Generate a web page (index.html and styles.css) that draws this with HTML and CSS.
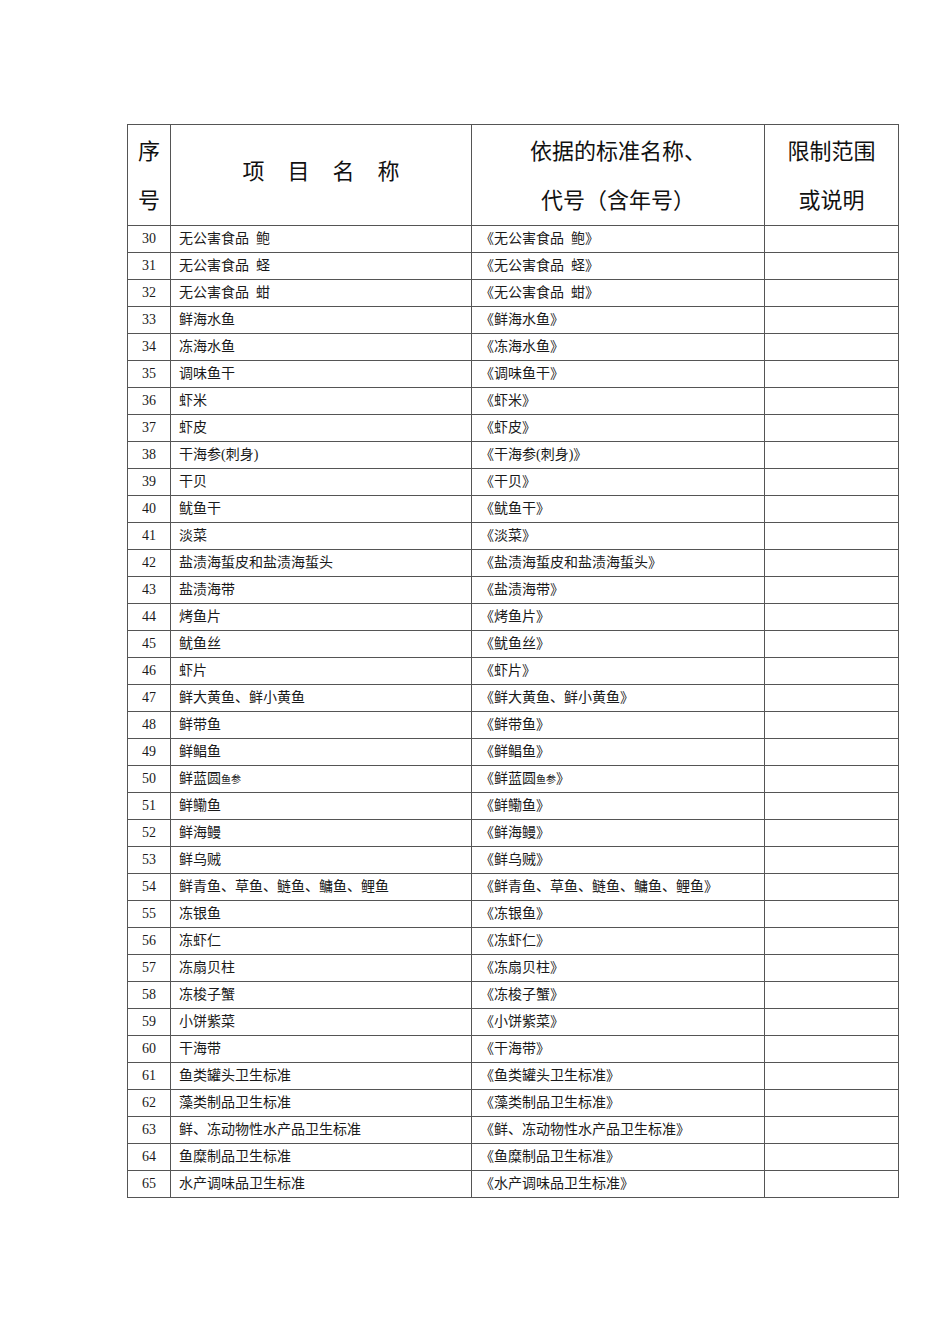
FILE: index.html
```html
<!DOCTYPE html>
<html lang="zh">
<head>
<meta charset="utf-8">
<title>标准目录</title>
<link rel="stylesheet" href="styles.css">
</head>
<body>
<div class="page">
<table class="std">
<colgroup><col class="c1"><col class="c2"><col class="c3"><col class="c4"></colgroup>
<thead>
<tr class="head">
<th><div class="hdown">序<br>号</div></th>
<th><div class="hup">项目名称</div></th>
<th><div class="hdown">依据的标准名称、<br>代号（含年号）</div></th>
<th><div class="hdown">限制范围<br>或说明</div></th>
</tr>
</thead>
<tbody>
<tr><td class="n">30</td><td>无公害食品&ensp;鲍</td><td>《无公害食品&ensp;鲍》</td><td></td></tr>
<tr><td class="n">31</td><td>无公害食品&ensp;蛏</td><td>《无公害食品&ensp;蛏》</td><td></td></tr>
<tr><td class="n">32</td><td>无公害食品&ensp;蚶</td><td>《无公害食品&ensp;蚶》</td><td></td></tr>
<tr><td class="n">33</td><td>鲜海水鱼</td><td>《鲜海水鱼》</td><td></td></tr>
<tr><td class="n">34</td><td>冻海水鱼</td><td>《冻海水鱼》</td><td></td></tr>
<tr><td class="n">35</td><td>调味鱼干</td><td>《调味鱼干》</td><td></td></tr>
<tr><td class="n">36</td><td>虾米</td><td>《虾米》</td><td></td></tr>
<tr><td class="n">37</td><td>虾皮</td><td>《虾皮》</td><td></td></tr>
<tr><td class="n">38</td><td>干海参(刺身)</td><td>《干海参(刺身)》</td><td></td></tr>
<tr><td class="n">39</td><td>干贝</td><td>《干贝》</td><td></td></tr>
<tr><td class="n">40</td><td>鱿鱼干</td><td>《鱿鱼干》</td><td></td></tr>
<tr><td class="n">41</td><td>淡菜</td><td>《淡菜》</td><td></td></tr>
<tr><td class="n">42</td><td>盐渍海蜇皮和盐渍海蜇头</td><td>《盐渍海蜇皮和盐渍海蜇头》</td><td></td></tr>
<tr><td class="n">43</td><td>盐渍海带</td><td>《盐渍海带》</td><td></td></tr>
<tr><td class="n">44</td><td>烤鱼片</td><td>《烤鱼片》</td><td></td></tr>
<tr><td class="n">45</td><td>鱿鱼丝</td><td>《鱿鱼丝》</td><td></td></tr>
<tr><td class="n">46</td><td>虾片</td><td>《虾片》</td><td></td></tr>
<tr><td class="n">47</td><td>鲜大黄鱼、鲜小黄鱼</td><td>《鲜大黄鱼、鲜小黄鱼》</td><td></td></tr>
<tr><td class="n">48</td><td>鲜带鱼</td><td>《鲜带鱼》</td><td></td></tr>
<tr><td class="n">49</td><td>鲜鲳鱼</td><td>《鲜鲳鱼》</td><td></td></tr>
<tr><td class="n">50</td><td>鲜蓝圆<span class="sm">鱼参</span></td><td>《鲜蓝圆<span class="sm">鱼参</span>》</td><td></td></tr>
<tr><td class="n">51</td><td>鲜鳓鱼</td><td>《鲜鳓鱼》</td><td></td></tr>
<tr><td class="n">52</td><td>鲜海鳗</td><td>《鲜海鳗》</td><td></td></tr>
<tr><td class="n">53</td><td>鲜乌贼</td><td>《鲜乌贼》</td><td></td></tr>
<tr><td class="n">54</td><td>鲜青鱼、草鱼、鲢鱼、鳙鱼、鲤鱼</td><td>《鲜青鱼、草鱼、鲢鱼、鳙鱼、鲤鱼》</td><td></td></tr>
<tr><td class="n">55</td><td>冻银鱼</td><td>《冻银鱼》</td><td></td></tr>
<tr><td class="n">56</td><td>冻虾仁</td><td>《冻虾仁》</td><td></td></tr>
<tr><td class="n">57</td><td>冻扇贝柱</td><td>《冻扇贝柱》</td><td></td></tr>
<tr><td class="n">58</td><td>冻梭子蟹</td><td>《冻梭子蟹》</td><td></td></tr>
<tr><td class="n">59</td><td>小饼紫菜</td><td>《小饼紫菜》</td><td></td></tr>
<tr><td class="n">60</td><td>干海带</td><td>《干海带》</td><td></td></tr>
<tr><td class="n">61</td><td>鱼类罐头卫生标准</td><td>《鱼类罐头卫生标准》</td><td></td></tr>
<tr><td class="n">62</td><td>藻类制品卫生标准</td><td>《藻类制品卫生标准》</td><td></td></tr>
<tr><td class="n">63</td><td>鲜、冻动物性水产品卫生标准</td><td>《鲜、冻动物性水产品卫生标准》</td><td></td></tr>
<tr><td class="n">64</td><td>鱼糜制品卫生标准</td><td>《鱼糜制品卫生标准》</td><td></td></tr>
<tr><td class="n">65</td><td>水产调味品卫生标准</td><td>《水产调味品卫生标准》</td><td></td></tr>
</tbody>
</table>
</div>
</body>
</html>
```
FILE: styles.css
```css
html, body {
  margin: 0;
  padding: 0;
  background: #ffffff;
}
body {
  font-family: "Liberation Serif", "Noto Sans CJK SC", serif;
  color: #1a1a1a;
}
.page {
  padding: 124px 0 0 127px;
}
.std {
  border-collapse: collapse;
  table-layout: fixed;
  width: 771px;
}
.c1 { width: 43px; }
.c2 { width: 301px; }
.c3 { width: 293px; }
.c4 { width: 134px; }
.std th, .std td {
  border: 1px solid #555555;
  padding: 0;
}
.head th {
  height: 100px;
  font-weight: normal;
  font-size: 22px;
  line-height: 49px;
  text-align: center;
  vertical-align: middle;
  color: #111;
}
.hdown {
  padding-top: 2px;
}
.hup {
  letter-spacing: 23px;
  text-indent: 23px;
  padding-bottom: 8px;
}
.std td {
  height: 26px;
  font-size: 14px;
  line-height: 16px;
  padding-left: 8px;
  white-space: nowrap;
  vertical-align: middle;
}
.std td.n {
  padding-left: 0;
  text-align: center;
  font-size: 14px;
}
.sm {
  font-size: 10px;
}
```
